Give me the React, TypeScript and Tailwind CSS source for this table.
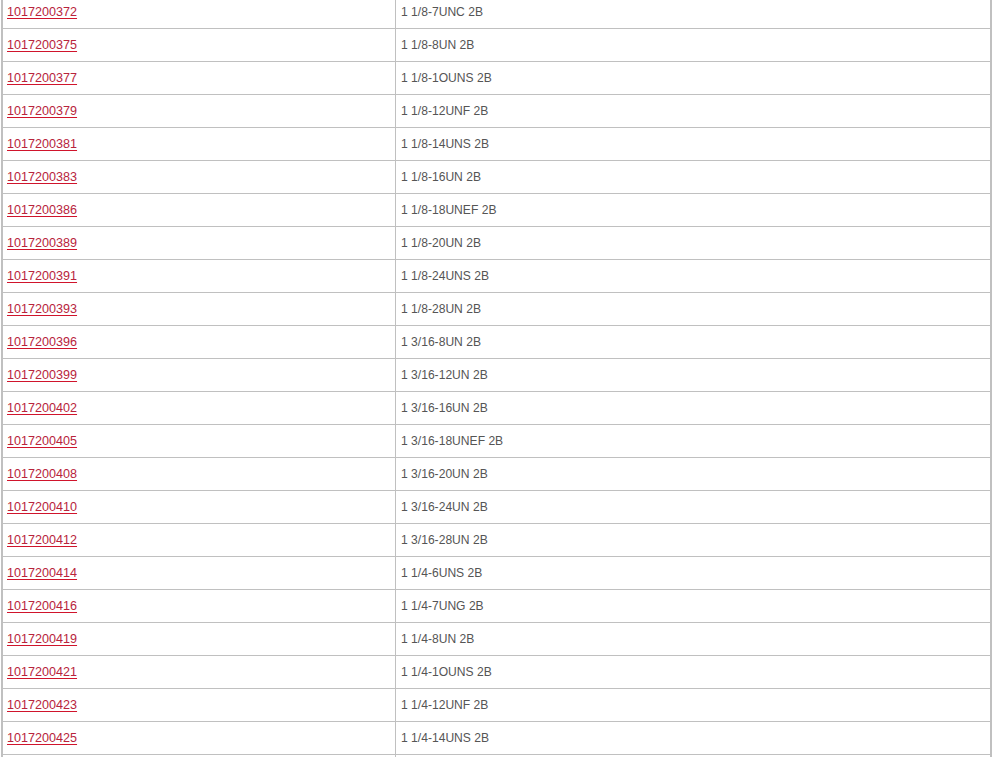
import React from "react";

const rows: [string, string][] = [
  ["1017200372", "1 1/8-7UNC 2B"],
  ["1017200375", "1 1/8-8UN 2B"],
  ["1017200377", "1 1/8-1OUNS 2B"],
  ["1017200379", "1 1/8-12UNF 2B"],
  ["1017200381", "1 1/8-14UNS 2B"],
  ["1017200383", "1 1/8-16UN 2B"],
  ["1017200386", "1 1/8-18UNEF 2B"],
  ["1017200389", "1 1/8-20UN 2B"],
  ["1017200391", "1 1/8-24UNS 2B"],
  ["1017200393", "1 1/8-28UN 2B"],
  ["1017200396", "1 3/16-8UN 2B"],
  ["1017200399", "1 3/16-12UN 2B"],
  ["1017200402", "1 3/16-16UN 2B"],
  ["1017200405", "1 3/16-18UNEF 2B"],
  ["1017200408", "1 3/16-20UN 2B"],
  ["1017200410", "1 3/16-24UN 2B"],
  ["1017200412", "1 3/16-28UN 2B"],
  ["1017200414", "1 1/4-6UNS 2B"],
  ["1017200416", "1 1/4-7UNG 2B"],
  ["1017200419", "1 1/4-8UN 2B"],
  ["1017200421", "1 1/4-1OUNS 2B"],
  ["1017200423", "1 1/4-12UNF 2B"],
  ["1017200425", "1 1/4-14UNS 2B"],
];

export default function App() {
  return (
    <div className="h-screen overflow-hidden bg-white" style={{ fontFamily: '"Liberation Sans", Arial, sans-serif' }}>
      <div className="ml-[1px] w-[991px] -mt-[4px] border-l-2 border-r-2 border-[#c0c0c0]">
        {rows.map(([code, desc]) => (
          <div key={code} className="flex h-[33px] border-b border-[#c0c0c0]">
            <div className="w-[393px] shrink-0 border-r border-[#c0c0c0] pl-[4px] flex items-center">
              <a href="#" className="text-[12.6px] text-[#b8243c] underline decoration-[#d0142c] underline-offset-[2px]">
                {code}
              </a>
            </div>
            <div className="flex-1 pl-[5px] flex items-center text-[12.1px] text-[#555555]">{desc}</div>
          </div>
        ))}
        <div className="flex h-[33px]">
          <div className="w-[393px] shrink-0 border-r border-[#c0c0c0]" />
          <div className="flex-1" />
        </div>
      </div>
    </div>
  );
}
